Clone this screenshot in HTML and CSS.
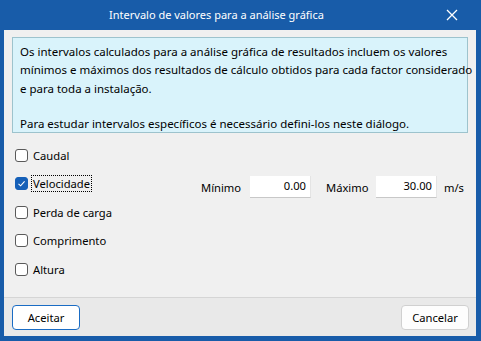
FILE: index.html
```html
<!DOCTYPE html>
<html lang="pt">
<head>
<meta charset="utf-8">
<title>Intervalo de valores</title>
<link rel="stylesheet" href="styles.css">
</head>
<body>
<div class="window">
  <div class="titlebar">
    <span class="title">Intervalo de valores para a análise gráfica</span>
    <span class="close">
      <svg width="12" height="12" viewBox="0 0 12 12"><path d="M1 1L11 11M11 1L1 11" stroke="#fff" stroke-width="1.3" fill="none"/></svg>
    </span>
  </div>
  <div class="client">
    <div class="content">
      <div class="info">
        <p>Os intervalos calculados para a análise gráfica de resultados incluem os valores<br>mínimos e máximos dos resultados de cálculo obtidos para cada factor considerado<br>e para toda a instalação.</p>
        <p>Para estudar intervalos específicos é necessário defini-los neste diálogo.</p>
      </div>
      <div class="rows">
        <div class="row"><span class="cb"></span><span class="lbl">Caudal</span></div>
        <div class="row">
          <div class="rowhead"><span class="cb checked"><svg width="9" height="9" viewBox="0 0 9 9"><path d="M1.5 4.8L3.6 6.8L7.6 2.3" stroke="#fff" stroke-width="1.1" fill="none"/></svg></span><span class="lbl focus">Velocidade</span></div>
          <div class="fields">
            <span class="flabel">Mínimo</span>
            <span class="input">0.00</span>
            <span class="flabel max">Máximo</span>
            <span class="input">30.00</span>
            <span class="unit">m/s</span>
          </div>
        </div>
        <div class="row"><span class="cb"></span><span class="lbl">Perda de carga</span></div>
        <div class="row"><span class="cb"></span><span class="lbl">Comprimento</span></div>
        <div class="row"><span class="cb"></span><span class="lbl">Altura</span></div>
      </div>
    </div>
    <div class="footer">
      <button class="btn primary">Aceitar</button>
      <button class="btn">Cancelar</button>
    </div>
  </div>
</div>
</body>
</html>
```
FILE: styles.css
```css
* { box-sizing: border-box; }
html, body { margin: 0; padding: 0; }
body {
  width: 481px; height: 341px; overflow: hidden;
  font-family: "Noto Sans", "Open Sans", sans-serif;
  font-size: 11.2px; color: #000;
}
.window {
  width: 481px; height: 341px;
  background: #185ca9;
  display: flex; flex-direction: column;
}
.titlebar {
  height: 30px; flex: none;
  display: flex; align-items: center; position: relative;
  color: #fff;
}
.title {
  position: absolute; left: 0; right: 48px; text-align: center;
  font-size: 11px; top: 7px;
}
.close { position: absolute; left: 446px; top: 9px; display: flex; }
.client {
  flex: 1; margin: 0 5px 5px 4px;
  background: #f0f0f0;
  display: flex; flex-direction: column;
}
.content { flex: 1; padding: 7px 8px 0 8px; }
.info {
  height: 96px;
  background: #d9f3fb;
  border: 1px solid #9dc3cd;
  padding: 5px 0 5px 7px;
  line-height: 18.4px;
  font-size: 11.5px;
  white-space: nowrap;
}
.info p { margin: 0 0 16.5px 0; }
.info p:last-child { margin: 0; }
.rows { padding-top: 8px; padding-left: 3px; }
.row { height: 28.5px; display: flex; align-items: center; }
.rowhead { display: flex; align-items: center; width: 186px; flex: none; }
.cb {
  width: 13px; height: 13px; flex: none;
  border: 1px solid #5a5a5a; border-radius: 3px; background: #fff;
  display: flex; align-items: center; justify-content: center;
}
.cb.checked { background: #1560b8; border-color: #1560b8; }
.lbl { margin-left: 3px; padding: 0 1px; line-height: 15px; border: 1px dotted transparent; }
.lbl.focus { border-color: #000; }
.fields { display: flex; align-items: center; margin-top: 7px; }
.flabel { width: 49px; }
.flabel.max { width: 50px; margin-left: 15px; }
.input {
  width: 61px; height: 22px; background: #fff;
  border-bottom: 1px solid #c8c8c8; border-right: 1px solid #e4e4e4;
  text-align: right; padding-right: 4px; line-height: 20px;
}
.unit { margin-left: 7px; }
.footer {
  height: 39px; flex: none;
  border-top: 1px solid #d5d5d5;
  background: #e9e9e9;
  display: flex; justify-content: space-between; align-items: flex-start;
  padding: 7px 7px 0 8px;
}
.btn {
  width: 68px; height: 25px;
  font-family: inherit; font-size: 11.2px; color: #000;
  background: #fdfdfd; border: 1px solid #d0d0d0; border-radius: 4px;
  padding: 0;
}
.btn.primary { border-color: #1a6cc4; background: #fff; }
```
